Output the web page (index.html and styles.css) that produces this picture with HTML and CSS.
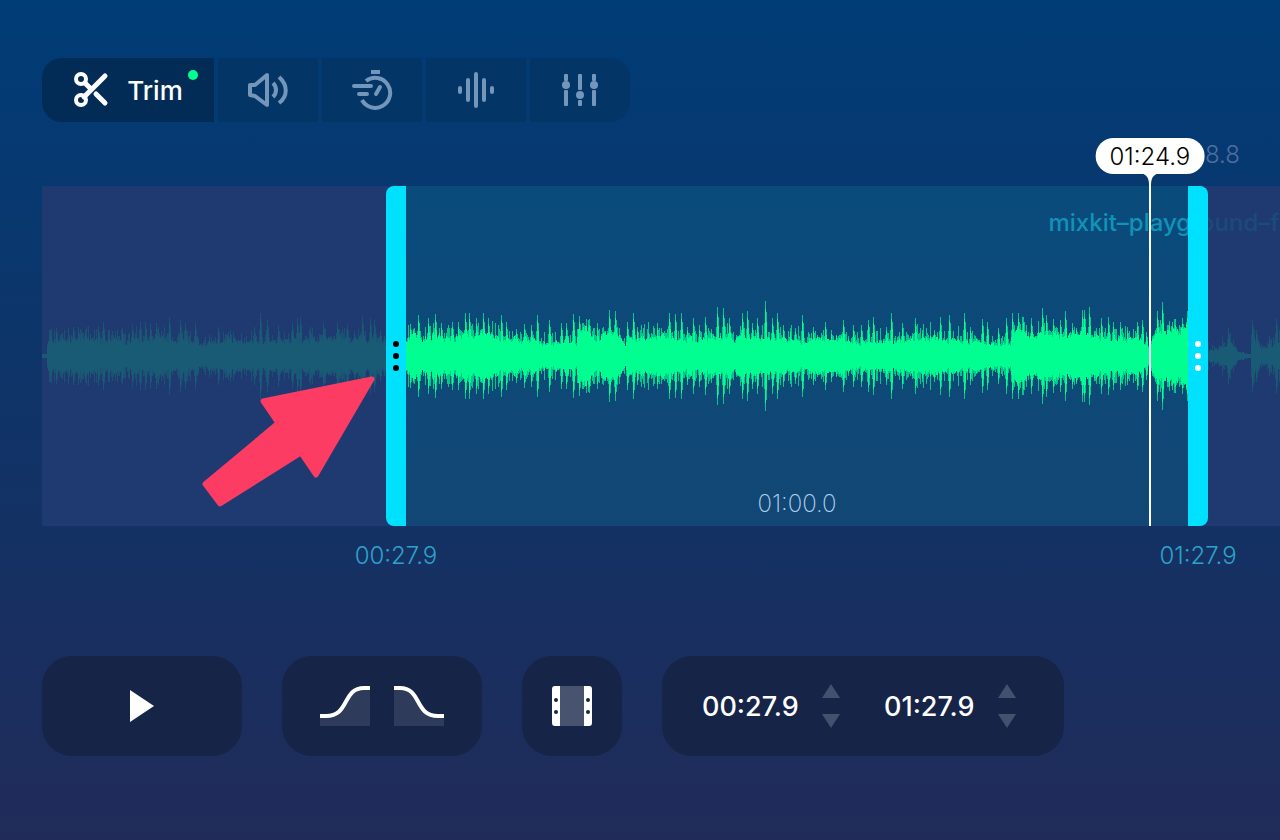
FILE: index.html
```html
<!DOCTYPE html>
<html lang="en">
<head>
    <meta charset="UTF-8">
    <meta name="viewport" content="width=device-width, initial-scale=1.0">
    <title>Audio Cutter</title>
    <link rel="stylesheet" href="styles.css">
</head>
<body>

    <nav class="tools" aria-label="Tools">
        <button class="tool tool-active">
            <svg class="icon" width="36" height="36" viewBox="0 0 36 36" fill="none" stroke="currentColor" stroke-width="4">
                <circle cx="8" cy="7" r="5"/>
                <circle cx="8" cy="28" r="5"/>
                <path d="M11 25 L32 4 M12 11 L17 16 M23 22 L32 31" stroke-linecap="round" stroke-width="5"/>
            </svg>
            <span>Trim</span>
            <i class="dot"></i>
        </button>
        <button class="tool" aria-label="Volume">
            <svg class="icon" width="42" height="36" viewBox="0 0 42 36" fill="none" stroke="currentColor" stroke-width="4" stroke-linejoin="round">
                <path d="M3 13 H8 L20 3 V33 L8 24 L3 23 Z"/>
                <path d="M26 11 C30 15 30 21 26 25 M32 5 C41 13 41 24 32 31"/>
            </svg>
        </button>
        <button class="tool" aria-label="Speed">
            <svg class="icon" width="42" height="42" viewBox="0 0 42 42" fill="none" stroke="currentColor" stroke-width="4" stroke-linecap="round">
                <path d="M15 12 A15 15 0 1 1 11 31" stroke-linecap="butt"/>
                <path d="M20 3 H29" stroke-linecap="butt"/>
                <path d="M3 17 H20 M8 25 H16 M29 18 L25 25"/>
            </svg>
        </button>
        <button class="tool" aria-label="Pitch">
            <svg class="icon" width="38" height="38" viewBox="0 0 38 38" fill="none" stroke="currentColor" stroke-width="4" stroke-linecap="round">
                <path d="M3 17 V21 M11 9 V29 M19 3 V35 M27 9 V29 M35 17 V21"/>
            </svg>
        </button>
        <button class="tool" aria-label="Equalizer">
            <svg class="icon" width="38" height="36" viewBox="0 0 38 36" fill="currentColor">
                <rect x="3" y="2" width="4" height="7" rx="1"/>
                <circle cx="5" cy="13" r="4"/>
                <rect x="3" y="18" width="4" height="16" rx="1"/>
                <rect x="17" y="2" width="4" height="16" rx="1"/>
                <circle cx="19" cy="23" r="4"/>
                <rect x="17" y="28" width="4" height="6" rx="1"/>
                <rect x="31" y="2" width="4" height="7" rx="1"/>
                <circle cx="33" cy="13" r="4"/>
                <rect x="31" y="18" width="4" height="16" rx="1"/>
            </svg>
        </button>
    </nav>

    <div class="ruler">8.8</div>

    <section class="track" aria-label="Waveform">
        <div class="outside before"><svg class="wave js-wave" data-start="42" data-end="386"></svg></div>
        <button class="handle handle-start" aria-label="Trim start">
            <i></i><i></i><i></i>
            <span class="handle-time">00:27.9</span>
        </button>
        <div class="selection">
            <svg class="wave js-wave" data-start="406" data-end="1188"></svg>
            <span class="length">01:00.0</span>
            <div class="playhead" style="left: 95%"><span class="playhead-time">01:24.9</span><svg class="playhead-tip" width="20" height="12" viewBox="0 0 20 12" fill="#fff"><path d="M0 0 H20 C14 1 11 4 11 12 H9 C9 4 6 1 0 0 Z"/></svg></div>
        </div>
        <button class="handle handle-end" aria-label="Trim end">
            <i></i><i></i><i></i>
            <span class="handle-time">01:27.9</span>
        </button>
        <div class="outside after"><svg class="wave js-wave" data-start="1208" data-end="1280"></svg></div>
        <div class="filename"><span>mixkit–playgr</span><span class="filename-out">ound–f</span></div>
        <svg class="arrow" width="180" height="140" viewBox="0 0 180 140" aria-hidden="true">
            <path d="M172 7 L63 29 L78 51 L5 112 L20 132 L101 81 L116 103 Z"/>
        </svg>
    </section>

    <div class="controls">
        <button class="panel play" aria-label="Play">
            <svg width="24" height="32" viewBox="0 0 24 32" fill="#fff"><path d="M0 0 L24 16 L0 32 Z"/></svg>
        </button>
        <div class="panel fades">
            <button class="fade" aria-label="Fade in">
                <svg width="50" height="40" viewBox="0 0 50 40" fill="none">
                    <path d="M0 30 H6 C30 30 22 2 44 2 H50 V40 H0 Z" fill="#2f3b5a"/>
                    <path d="M0 30 H6 C30 30 22 2 44 2 H50" stroke="#fff" stroke-width="4"/>
                </svg>
            </button>
            <button class="fade" aria-label="Fade out">
                <svg width="50" height="40" viewBox="0 0 50 40" fill="none">
                    <path d="M0 2 H6 C28 2 20 30 44 30 H50 V40 H0 Z" fill="#2f3b5a"/>
                    <path d="M0 2 H6 C28 2 20 30 44 30 H50" stroke="#fff" stroke-width="4"/>
                </svg>
            </button>
        </div>
        <button class="panel cut" aria-label="Remove selection">
            <svg width="40" height="40" viewBox="0 0 40 40">
                <path d="M8 0 H32 V40 H8 Z" fill="#47536f"/>
                <path d="M3 0 H8 V40 H3 Q0 40 0 37 V3 Q0 0 3 0 Z M32 0 H37 Q40 0 40 3 V37 Q40 40 37 40 H32 Z" fill="#fff"/>
                <g fill="#152447"><circle cx="4" cy="14" r="2"/><circle cx="4" cy="26" r="2"/><circle cx="36" cy="14" r="2"/><circle cx="36" cy="26" r="2"/></g>
            </svg>
        </button>
        <div class="panel times">
            <input class="time" type="text" value="00:27.9" aria-label="Start time">
            <div class="stepper">
                <button aria-label="Start later"><svg width="18" height="14" viewBox="0 0 18 14"><path d="M9 0 L18 14 H0 Z"/></svg></button>
                <button aria-label="Start earlier"><svg width="18" height="14" viewBox="0 0 18 14"><path d="M0 0 H18 L9 14 Z"/></svg></button>
            </div>
            <input class="time time-end" type="text" value="01:27.9" aria-label="End time">
            <div class="stepper">
                <button aria-label="End later"><svg width="18" height="14" viewBox="0 0 18 14"><path d="M9 0 L18 14 H0 Z"/></svg></button>
                <button aria-label="End earlier"><svg width="18" height="14" viewBox="0 0 18 14"><path d="M0 0 H18 L9 14 Z"/></svg></button>
            </div>
        </div>
    </div>

    <script src="script.js"></script>
</body>
</html>
```
FILE: styles.css
```css
* {
    box-sizing: border-box;
}

body {
    margin: 0;
    min-height: 100vh;
    padding: 58px 0 84px 42px;
    background: linear-gradient(#003c76, #202b59);
    color: white;
    font-family: Inter, "Liberation Sans", sans-serif;
    font-size: 24px;
    overflow-x: hidden;
}

button {
    border: 0;
    padding: 0;
    background: none;
    color: inherit;
    font: inherit;
    cursor: pointer;
}

svg {
    display: block;
}

/* toolbar */
.tools {
    display: flex;
    gap: 4px;
}

.tool {
    display: flex;
    align-items: center;
    justify-content: center;
    width: 100px;
    height: 64px;
    background: #033566;
    color: #7496bb;
}

.tool:first-child {
    border-radius: 20px 0 0 20px;
}

.tool:last-child {
    border-radius: 0 20px 20px 0;
}

.tool-active {
    position: relative;
    gap: 18px;
    width: 172px;
    background: #022c55;
    color: white;
    font-size: 26px;
    font-weight: 500;
}

.dot {
    position: absolute;
    top: 12px;
    right: 16px;
    width: 10px;
    height: 10px;
    border-radius: 50%;
    background: #00ff90;
}

.ruler {
    height: 64px;
    padding: 16px 40px 0 0;
    color: #4d6f9f;
    font-weight: 300;
    line-height: 34px;
    text-align: right;
}

/* track */
.track {
    display: flex;
    position: relative;
    height: 340px;
    margin-bottom: 130px;
    background: #1f3a70;
}

.outside,
.selection {
    min-width: 0;
}

.before {
    flex: 344;
}

.selection {
    position: relative;
    flex: 782;
    background: linear-gradient(#094b7b, #124775);
}

.after {
    flex: 72;
}

.wave {
    width: 100%;
    height: 100%;
    fill: #00ff90;
}

.wave .peaks {
    opacity: 0.7;
}

.outside .wave {
    opacity: 0.17;
}

.handle {
    display: flex;
    flex-direction: column;
    align-items: center;
    justify-content: center;
    gap: 6px;
    position: relative;
    z-index: 2;
    flex: 0 0 20px;
    background: #00e1ff;
}

.handle i {
    width: 6px;
    height: 6px;
    border-radius: 50%;
    background: white;
}

.handle-start {
    border-radius: 8px 0 0 8px;
}

.handle-start i {
    background: black;
}

.handle-end {
    border-radius: 0 8px 8px 0;
}

.handle-time {
    position: absolute;
    top: 100%;
    left: 50%;
    margin-top: 14px;
    transform: translateX(-50%);
    color: #2ba3cb;
    font-weight: 300;
    line-height: 32px;
}

.length {
    position: absolute;
    bottom: 6px;
    left: 50%;
    transform: translateX(-50%);
    color: #b5d3ef;
    font-weight: 200;
    line-height: 32px;
}

.playhead {
    position: absolute;
    z-index: 3;
    top: -12px;
    bottom: 0;
    width: 2px;
    background: white;
}

.playhead-time {
    position: absolute;
    bottom: 100%;
    left: 50%;
    transform: translateX(-50%);
    padding: 2px 14px 0;
    border-radius: 18px;
    background: white;
    color: black;
    font-weight: 300;
    line-height: 34px;
}

.playhead-tip {
    position: absolute;
    top: -1px;
    left: -9px;
}

.filename {
    position: absolute;
    z-index: 1;
    top: 20px;
    left: 81.3%;
    right: 0;
    overflow: hidden;
    color: #0f93b8;
    font-weight: 500;
    line-height: 34px;
    white-space: nowrap;
}

.filename-out {
    color: #1c4a7c;
}

.arrow {
    position: absolute;
    z-index: 3;
    top: 186px;
    left: 158px;
    fill: #fc3c63;
    stroke: #fc3c63;
    stroke-width: 5;
    stroke-linejoin: round;
}

/* controls */
.controls {
    display: flex;
    flex-wrap: wrap;
    gap: 40px;
}

.panel {
    display: flex;
    align-items: center;
    justify-content: center;
    height: 100px;
    border-radius: 30px;
    background: #152447;
}

.play,
.fades {
    width: 200px;
}

.fades {
    gap: 24px;
}

.cut {
    width: 100px;
}

.times {
    justify-content: flex-start;
    padding: 0 48px 0 40px;
}

.time {
    width: 120px;
    border: 0;
    padding: 0;
    background: none;
    color: white;
    font: inherit;
    font-size: 27px;
    font-weight: 500;
}

.time-end {
    width: 114px;
    margin-left: 44px;
}

.stepper {
    display: grid;
    gap: 16px;
    fill: #43506e;
}
```
FILE: script.js
```js
// half height of the solid part, [x, height]
const body = [
    [42, 2], [46, 2], [48, 14], [75, 17], [120, 14], [160, 17], [205, 11], [225, 15], [300, 14], [345, 18], [386, 14],
    [406, 12], [412, 20], [450, 19], [480, 20], [520, 16], [552, 11], [565, 17], [576, 12], [578, 27], [588, 24],
    [595, 15], [603, 24], [616, 25], [625, 11], [627, 17], [660, 18], [720, 18], [760, 18], [800, 15], [840, 17],
    [860, 14], [876, 15], [880, 13], [925, 18], [960, 15], [1000, 11], [1010, 12], [1012, 25], [1035, 22], [1060, 20],
    [1085, 24], [1110, 16], [1140, 17], [1149, 8], [1155, 24], [1188, 27],
    [1208, 6], [1225, 8], [1229, 13], [1238, 4], [1250, 2], [1252, 20], [1262, 6], [1272, 10], [1280, 14]
];

// loud peaks, [x, height]
const peaks = [
    [50, 26], [56, 28], [73, 29], [78, 29], [85, 26], [98, 30], [103, 34], [108, 26], [122, 28], [132, 31], [140, 34],
    [145, 34], [150, 33], [156, 33], [169, 39], [180, 36], [185, 33], [195, 33], [218, 29], [230, 26], [254, 29],
    [260, 43], [267, 36], [278, 31], [292, 33], [297, 38], [300, 39], [310, 29], [323, 34], [337, 34], [347, 31],
    [362, 40], [370, 38], [374, 36], [380, 25],
    [410, 32], [418, 41], [428, 38], [435, 42], [441, 33], [452, 34], [458, 34], [465, 43], [469, 43], [476, 38],
    [483, 43], [488, 38], [501, 41], [506, 34], [516, 27], [524, 32], [531, 31], [537, 41], [549, 36], [561, 33],
    [566, 33], [573, 42], [579, 40], [583, 33], [589, 37], [597, 33], [609, 46], [615, 45], [627, 34], [633, 43],
    [637, 29], [648, 27], [657, 33], [669, 43], [675, 42], [681, 43], [687, 29], [693, 38], [699, 31], [705, 39],
    [711, 27], [717, 49], [723, 48], [729, 38], [742, 43], [747, 45], [752, 33], [757, 38], [765, 55], [772, 38],
    [777, 43], [783, 31], [790, 28], [795, 28], [802, 41], [813, 29], [825, 34], [831, 26], [843, 36], [853, 31],
    [861, 31], [868, 36], [873, 39], [886, 29], [891, 43], [902, 33], [915, 38], [922, 26], [934, 26], [940, 39],
    [949, 41], [964, 43], [970, 29], [982, 37], [987, 34], [998, 28], [1006, 38], [1012, 43], [1018, 43], [1023, 39],
    [1031, 38], [1042, 48], [1046, 41], [1053, 37], [1060, 36], [1065, 45], [1072, 33], [1082, 46], [1084, 46],
    [1089, 49], [1101, 38], [1108, 39], [1113, 34], [1120, 34], [1127, 29], [1137, 34], [1142, 36], [1146, 24],
    [1157, 45], [1162, 54], [1167, 31], [1175, 36], [1182, 38], [1187, 45],
    [1228, 28], [1252, 36], [1256, 26], [1269, 20], [1276, 38]
];

let seed = 7;

function random() {
    seed = (seed * 16807) % 2147483647;
    return seed / 2147483647;
}

function bodyAt(x) {
    for (let i = 1; i < body.length; i++) {
        const [x1, h1] = body[i - 1];
        const [x2, h2] = body[i];
        if (x <= x2) {
            return h1 + (h2 - h1) * (x - x1) / (x2 - x1);
        }
    }
    return body[body.length - 1][1];
}

function bar(x, height) {
    return `M${x} ${170 - height}h1v${height * 2}h-1z`;
}

document.querySelectorAll('.js-wave').forEach((svg) => {
    const start = Number(svg.dataset.start);
    const end = Number(svg.dataset.end);
    let solid = '';
    let thin = '';
    let drift = 1;

    for (let x = start; x < end; x++) {
        const base = bodyAt(x);
        drift = drift * 0.6 + (0.7 + random() * 0.6) * 0.4;
        const height = Math.round(base * drift * (0.85 + random() * 0.25));
        solid += bar(x - start, height);
        if (base > 5) {
            thin += bar(x - start, Math.round(height + random() * random() * 16));
        }
    }

    // each peak falls off over its neighbours
    peaks.forEach(([x, height]) => {
        if (x >= start && x < end) {
            thin += bar(x - start, height);
            thin += bar(x - start + 1, Math.round(height * 0.8));
            thin += bar(x - start - 1, Math.round(height * 0.6));
            solid += bar(x - start, Math.round(height * 0.85));
            solid += bar(x - start + 1, Math.round(height * 0.62));
        }
    });

    svg.setAttribute('viewBox', `0 0 ${end - start} 340`);
    svg.setAttribute('preserveAspectRatio', 'none');
    svg.innerHTML = `<path class="peaks" d="${thin}"/><path d="${solid}"/>`;
});
```
